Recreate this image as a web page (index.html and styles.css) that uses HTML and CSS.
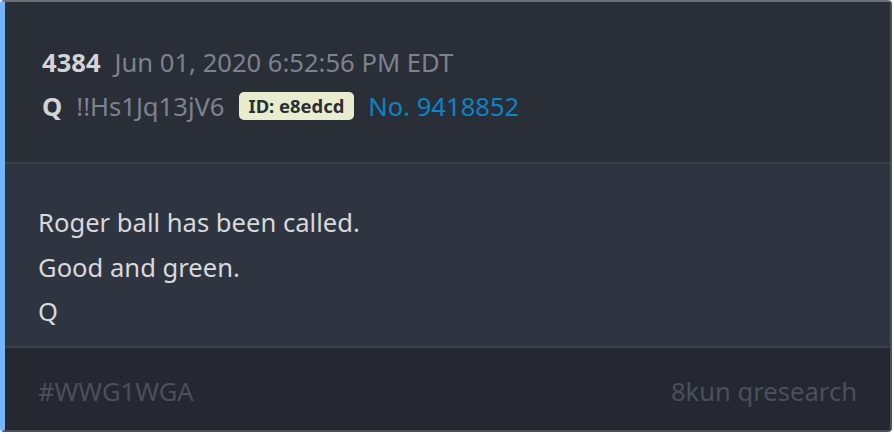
FILE: index.html
```html
<!DOCTYPE html>
<html lang="en">
<head>
    <meta charset="UTF-8">
    <meta name="viewport" content="width=device-width, initial-scale=1.0">
    <title>Post 4384</title>
    <link rel="stylesheet" href="styles.css">
</head>
<body>

<div class="post">
    <div class="post-header">
        <div class="meta-line">
            <span class="post-num">4384</span>
            <span class="post-date">Jun 01, 2020 6:52:56 PM EDT</span>
        </div>
        <div class="meta-line">
            <span class="author">Q</span>
            <span class="trip">!!Hs1Jq13jV6</span>
            <span class="user-id">ID: e8edcd</span>
            <span class="post-link">No. 9418852</span>
        </div>
    </div>

    <div class="post-body">
        <div>Roger ball has been called.</div>
        <div>Good and green.</div>
        <div>Q</div>
    </div>

    <div class="post-footer">
        <span>#WWG1WGA</span>
        <span>8kun qresearch</span>
    </div>
</div>

</body>
</html>
```

FILE: styles.css
```css
body {
    margin: 0;
    background-color: #ffffff;
    font-family: "Noto Sans", "Open Sans", sans-serif;
}
.post {
    width: 885px;
    height: 428px;
    border: 2px solid #4b505b;
    border-top-color: #6b707c;
    border-left: 5px solid #74b4ff;
    border-radius: 4px;
    background-color: #2a2e37;
    display: flex;
    flex-direction: column;
    overflow: hidden;
}
/* Header with post number, date and author */
.post-header {
    height: 162px;
    box-sizing: border-box;
    padding: 38px 0 0 37px;
    background-color: #2a2e37;
    border-bottom: 2px solid #3a3f4a;
}
.meta-line {
    display: flex;
    align-items: center;
    height: 44px;
    font-size: 25.6px;
    color: #7d8290;
}
.post-num, .author {
    font-weight: bold;
    color: #d3d4d6;
    margin-right: 14px;
}
.trip {
    margin-right: 14px;
}
.user-id {
    background-color: #e8edcd;
    color: #2a2e37;
    font-size: 18.4px;
    font-weight: bold;
    padding: 1px 10px;
    border-radius: 5px;
    margin-right: 14px;
    line-height: 26px;
}
.post-link {
    color: #0a84c8;
}
/* Post text */
.post-body {
    height: 184px;
    box-sizing: border-box;
    padding: 37px 0 0 33px;
    background-color: #2f3540;
    border-bottom: 2px solid #3a3f4a;
    font-size: 25.6px;
    line-height: 44.5px;
    color: #d8d9db;
}
.post-footer {
    flex: 1;
    display: flex;
    justify-content: space-between;
    align-items: center;
    padding: 4px 33px 0;
    background-color: #252830;
    font-size: 25.6px;
    color: #4a505c;
}
```
